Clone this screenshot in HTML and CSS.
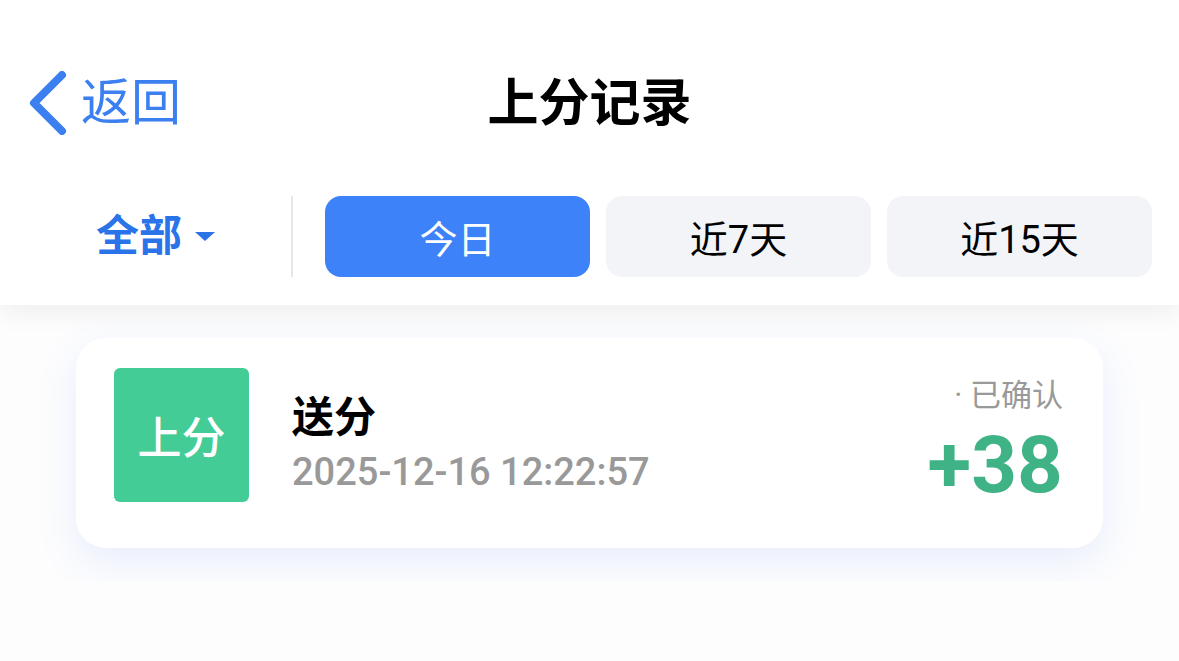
FILE: index.html
```html
<!DOCTYPE html>
<html lang="zh-CN">
<head>
    <meta charset="UTF-8">
    <meta name="viewport" content="width=device-width, initial-scale=1.0">
    <title>上分记录</title>
    <link rel="stylesheet" href="styles.css">
</head>
<body>
    <div class="header">
        <div class="topbar">
            <a class="back" href="#">
                <svg class="back-icon" width="40" height="64" viewBox="0 0 40 64">
                    <path d="M33 4 L5 32 L33 60" fill="none" stroke="#3c7ff0" stroke-width="8" stroke-linecap="round" stroke-linejoin="round"/>
                </svg>
                <span>返回</span>
            </a>
            <h1 class="title">上分记录</h1>
            <div></div>
        </div>
        <div class="filter">
            <div class="all">全部<span class="caret"></span></div>
            <div class="divider"></div>
            <div class="tabs">
                <button class="tab active">今日</button>
                <button class="tab">近7天</button>
                <button class="tab">近15天</button>
            </div>
        </div>
    </div>

    <div class="list">
        <div class="card">
            <div class="badge">上分</div>
            <div class="info">
                <div class="name">送分</div>
                <div class="time">2025-12-16 12:22:57</div>
            </div>
            <div class="side">
                <div class="status">· 已确认</div>
                <div class="amount">+38</div>
            </div>
        </div>
    </div>
</body>
</html>
```

FILE: styles.css
```css
body {
    margin: 0;
    padding: 0;
    background: #fdfdfe;
    font-family: Roboto, "Noto Sans CJK SC", sans-serif;
    color: #000;
}
.header {
    background: #fff;
    box-shadow: 0 8px 24px rgba(0, 0, 0, 0.06);
    position: relative;
}
.topbar {
    display: grid;
    grid-template-columns: 1fr auto 1fr;
    align-items: center;
    height: 100px;
    padding-top: 53px;
}
.back {
    display: flex;
    align-items: center;
    padding-left: 29px;
    color: #3c7ff0;
    text-decoration: none;
    font-size: 50px;
    line-height: 1;
}
.back-icon {
    margin-right: 12px;
}
.title {
    margin: 0;
    font-size: 51px;
    font-weight: bold;
    line-height: 1;
}
.filter {
    display: flex;
    align-items: center;
    padding: 43px 27px 28px 0;
}
.all {
    width: 291px;
    display: flex;
    align-items: center;
    justify-content: center;
    font-size: 43px;
    font-weight: bold;
    color: #2a73e8;
    line-height: 1;
    padding-left: 20px;
    box-sizing: border-box;
}
.caret {
    width: 0;
    height: 0;
    margin-left: 13px;
    border-left: 10px solid transparent;
    border-right: 10px solid transparent;
    border-top: 9px solid #2a73e8;
}
.divider {
    width: 2px;
    height: 81px;
    background: #e6e7ea;
}
.tabs {
    flex: 1;
    display: flex;
    gap: 16px;
    margin-left: 32px;
}
.tab {
    flex: 1;
    height: 81px;
    border: none;
    border-radius: 16px;
    background: #f3f4f7;
    color: #000;
    font-family: Roboto, "Noto Sans CJK SC", sans-serif;
    font-size: 38px;
    cursor: pointer;
}
.tab.active {
    background: #3d82f8;
    color: #fff;
}
.list {
    padding: 33px 76px;
}
.card {
    display: flex;
    align-items: flex-start;
    height: 210px;
    box-sizing: border-box;
    background: #fff;
    border-radius: 30px;
    padding: 30px 40px 0 38px;
    box-shadow: 0 14px 40px rgba(70, 120, 230, 0.12);
}
.badge {
    width: 135px;
    height: 134px;
    border-radius: 6px;
    background: #43cc96;
    color: #fff;
    font-size: 44px;
    font-weight: 500;
    display: flex;
    align-items: center;
    justify-content: center;
}
.info {
    flex: 1;
    margin-left: 43px;
    padding-top: 24px;
}
.name {
    font-size: 42px;
    font-weight: bold;
    line-height: 52px;
}
.time {
    margin-top: 4px;
    font-size: 38px;
    font-weight: 500;
    color: #999;
    line-height: 48px;
}
.side {
    text-align: right;
    padding-top: 8px;
}
.status {
    font-size: 31px;
    color: #999;
    line-height: 40px;
}
.amount {
    margin-top: 9px;
    font-size: 80px;
    font-weight: bold;
    color: #40b386;
    line-height: 80px;
}
```
